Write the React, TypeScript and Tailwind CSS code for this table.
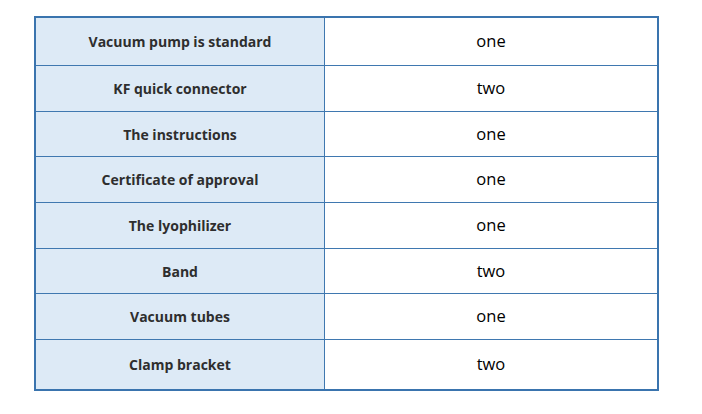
const rows: { name: string; qty: string; h: string }[] = [
  { name: "Vacuum pump is standard", qty: "one", h: "h-[48px]" },
  { name: "KF quick connector", qty: "two", h: "h-[46px]" },
  { name: "The instructions", qty: "one", h: "h-[45px]" },
  { name: "Certificate of approval", qty: "one", h: "h-[46px]" },
  { name: "The lyophilizer", qty: "one", h: "h-[46px]" },
  { name: "Band", qty: "two", h: "h-[45px]" },
  { name: "Vacuum tubes", qty: "one", h: "h-[46px]" },
  { name: "Clamp bracket", qty: "two", h: "h-[49px]" },
];

export default function App() {
  return (
    <div className="h-[414px] w-[702px] bg-white pl-[34px] pt-[16px] font-['Open_Sans',sans-serif]">
      <div className="flex w-[625px] flex-col border-2 border-[#3a74ae]">
        {rows.map((row, i) => (
          <div
            key={row.name}
            className={`flex ${row.h} ${i < rows.length - 1 ? "border-b border-[#3f78b0]" : ""}`}
          >
            <div className="flex w-[289px] items-center justify-center border-r border-[#3f78b0] bg-[#ddeaf6] text-[14px] font-bold text-[#2e2e2e]">
              {row.name}
            </div>
            <div className="flex flex-1 items-center justify-center text-[16.5px] text-black">
              {row.qty}
            </div>
          </div>
        ))}
      </div>
    </div>
  );
}
